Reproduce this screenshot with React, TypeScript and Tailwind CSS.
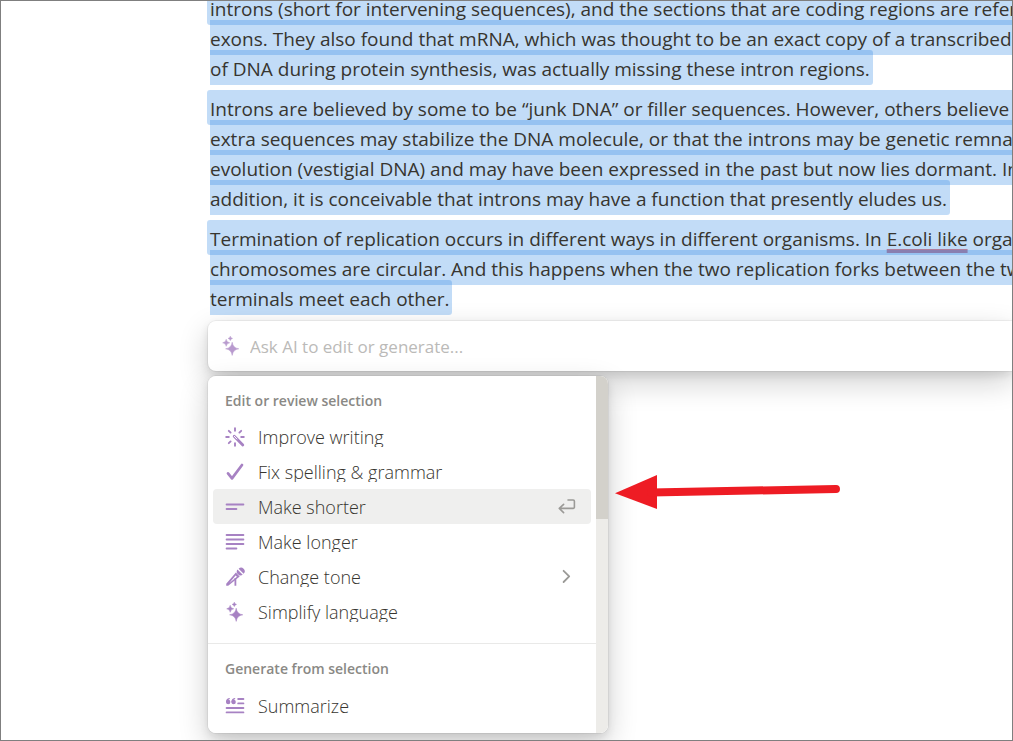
import type { ReactNode } from "react";

const purple = "#a782c3";

function Star({ x, y, r }: { x: number; y: number; r: number }) {
  const k = r * 0.12;
  return (
    <path
      d={`M${x} ${y - r}Q${x + k} ${y - k} ${x + r} ${y}Q${x + k} ${y + k} ${x} ${y + r}Q${x - k} ${y + k} ${x - r} ${y}Q${x - k} ${y - k} ${x} ${y - r}Z`}
      stroke={purple}
      strokeWidth={0.5}
      strokeLinejoin="round"
    />
  );
}

function Icon({ children, className = "" }: { children: ReactNode; className?: string }) {
  return (
    <svg viewBox="0 0 20 20" fill={purple} aria-hidden="true" className={`size-5 shrink-0 ${className}`}>
      {children}
    </svg>
  );
}

function SparkleIcon({ className = "" }: { className?: string }) {
  return (
    <Icon className={className}>
      <Star x={11.2} y={12.8} r={6.6} />
      <Star x={5.2} y={6.8} r={3.5} />
      <Star x={9.3} y={2.4} r={2.2} />
    </Icon>
  );
}

function WandIcon() {
  return (
    <Icon>
      <g stroke={purple} strokeWidth={1.9} strokeLinecap="round" fill="none">
        <path d="M10 1.2v2.6M10 16.2v2.6M1.2 10h2.6M16.2 10h2.6M3.8 3.8l1.8 1.8M16.2 3.8l-1.8 1.8M3.8 16.2l1.8-1.8" />
        <path d="M9.2 9.2l8.6 8.8" strokeWidth={2.8} />
        <path d="M9.3 9.3l2.6 2.7" stroke="#ffffff" strokeWidth={1} />
      </g>
    </Icon>
  );
}

function CheckIcon() {
  return (
    <Icon>
      <path d="M3 11.4l4 5L17 3" fill="none" stroke={purple} strokeWidth={2.7} strokeLinecap="round" strokeLinejoin="round" />
    </Icon>
  );
}

function ShorterIcon() {
  return (
    <Icon>
      <path d="M1.6 7.5h16.8M1.6 12h9.8" fill="none" stroke={purple} strokeWidth={1.9} strokeLinecap="round" />
    </Icon>
  );
}

function LongerIcon() {
  return (
    <Icon>
      <path d="M1.6 3h16.8M1.6 7.5h16.8M1.6 12h16.8M1.6 16.5h9.8" fill="none" stroke={purple} strokeWidth={1.9} strokeLinecap="round" />
    </Icon>
  );
}

function MicIcon() {
  return (
    <Icon>
      <path d="M13.6 1.7a3.5 3.5 0 0 1 5 5l-5-5zM12.5 2.6l5.2 5.2a3.6 3.6 0 0 1-3.6.5l-2.1-2.1a3.6 3.6 0 0 1 .5-3.6z" />
      <path d="M10.9 5.6l3.8 3.8L3.2 18.8H1.2v-2zM10.6 8.6L4.4 16l7.5-6.2z" fillRule="evenodd" />
      <path d="M10.4 11v7.8" stroke={purple} strokeWidth={1.8} fill="none" />
    </Icon>
  );
}

function SummarizeIcon() {
  return (
    <Icon>
      <path d="M13.2 3h5.2M13.2 7.4h5.2M1.6 12h16.8M1.6 16.4h16.8" fill="none" stroke={purple} strokeWidth={1.9} strokeLinecap="round" />
      <circle cx={3.2} cy={6} r={2.2} />
      <circle cx={8.6} cy={6} r={2.2} />
      <path d="M1.6 6c0-2 .9-3.1 2.7-3.4M7 6c0-2 .9-3.1 2.7-3.4" fill="none" stroke={purple} strokeWidth={1.2} strokeLinecap="round" />
    </Icon>
  );
}

function ReturnIcon() {
  return (
    <svg viewBox="0 0 20 20" fill="none" stroke="#9b9a97" strokeWidth={1.6} strokeLinecap="round" strokeLinejoin="round" aria-hidden="true" className="size-5 shrink-0">
      <path d="M11 3h5.2a1.2 1.2 0 0 1 1.2 1.2v6a1.2 1.2 0 0 1-1.2 1.2H2.4M6.6 7.4l-4.3 4 4.3 4.2" />
    </svg>
  );
}

function ChevronIcon() {
  return (
    <svg viewBox="0 0 20 20" fill="none" stroke="#9b9a97" strokeWidth={1.8} strokeLinecap="round" strokeLinejoin="round" aria-hidden="true" className="size-5 shrink-0">
      <path d="M6.6 3.8l5.6 5.6-5.6 5.6" />
    </svg>
  );
}

function Selected({ children }: { children: ReactNode }) {
  return (
    <p className="-indent-[3px]">
      <span className="rounded-[3px] bg-[rgba(35,131,226,0.28)] px-[3px] pt-[6px] pb-[3px]">{children}</span>
    </p>
  );
}

function Item({ icon, label, end, active }: { icon: ReactNode; label: string; end?: ReactNode; active?: boolean }) {
  return (
    <li>
      <button type="button" className={`flex h-[35px] w-full items-center rounded-[4px] pr-[14px] pl-3 text-left ${active ? "bg-[#efefee]" : ""}`}>
        {icon}
        <span className="ml-[13px] flex-1 truncate text-[18px] leading-5 font-light text-[#37352f]">{label}</span>
        {end}
      </button>
    </li>
  );
}

function Heading({ children }: { children: ReactNode }) {
  return <h2 className="px-[17px] text-[14px] leading-5 font-semibold text-[#8a8985]">{children}</h2>;
}

export default function App() {
  return (
    <main className="relative min-h-screen overflow-hidden border border-[#7f7f7f] bg-white pb-[7px] pl-[206px] font-['Open_Sans','Noto_Sans',sans-serif] text-[#37352f]">
      <article className="-mt-[7px] ml-[3px] flex flex-col gap-[10px] text-[19px] leading-[30px] whitespace-nowrap">
        <Selected>
          introns (short for intervening sequences), and the sections that are coding regions are referred to as
          <br />
          exons. They also found that mRNA, which was thought to be an exact copy of a transcribed section
          <br />
          of DNA during protein synthesis, was actually missing these intron regions.
        </Selected>
        <Selected>
          Introns are believed by some to be “junk DNA” or filler sequences. However, others believe that
          <br />
          extra sequences may stabilize the DNA molecule, or that the introns may be genetic remnants of
          <br />
          evolution (vestigial DNA) and may have been expressed in the past but now lies dormant. In
          <br />
          addition, it is conceivable that introns may have a function that presently eludes us.
        </Selected>
        <Selected>
          Termination of replication occurs in different ways in different organisms. In{" "}
          <span className="underline decoration-[#b07f9d] decoration-4 underline-offset-3 [text-decoration-skip-ink:none]">E.coli like</span> organisms
          <br />
          chromosomes are circular. And this happens when the two replication forks between the two
          <br />
          terminals meet each other.
        </Selected>
      </article>

      <label className="mt-[7px] ml-px flex h-[50px] items-center rounded-l-[8px] bg-white pl-[13px] shadow-[0_0_0_1px_rgba(15,15,15,0.05),0_4px_8px_rgba(15,15,15,0.1),0_11px_30px_rgba(15,15,15,0.2)]">
        <SparkleIcon className="opacity-80" />
        <input
          type="text"
          aria-label="Ask AI"
          placeholder="Ask AI to edit or generate..."
          className="ml-[9px] flex-1 bg-transparent pt-px text-[17px] outline-none placeholder:text-[#bbbab8]"
        />
      </label>

      <div className="relative mt-[5px] ml-px flex w-[400px] rounded-[8px] shadow-[0_0_0_1px_rgba(15,15,15,0.05),0_4px_8px_rgba(15,15,15,0.1),0_11px_30px_rgba(15,15,15,0.2)]">
        <div className="flex flex-1 overflow-hidden rounded-[8px] bg-white">
          <div className="min-w-0 flex-1">
            <section className="pt-[15px] pb-[14px]">
              <Heading>Edit or review selection</Heading>
              <ul className="mt-2 px-[5px]">
                <Item icon={<WandIcon />} label="Improve writing" />
                <Item icon={<CheckIcon />} label="Fix spelling & grammar" />
                <Item icon={<ShorterIcon />} label="Make shorter" end={<ReturnIcon />} active />
                <Item icon={<LongerIcon />} label="Make longer" />
                <Item icon={<MicIcon />} label="Change tone" end={<ChevronIcon />} />
                <Item icon={<SparkleIcon />} label="Simplify language" />
              </ul>
            </section>
            <section className="border-t border-[#e9e9e8] pt-[15px] pb-[10px]">
              <Heading>Generate from selection</Heading>
              <ul className="mt-[9px] px-[5px]">
                <Item icon={<SummarizeIcon />} label="Summarize" />
              </ul>
            </section>
          </div>
          <div className="w-3 bg-[#edece9]">
            <div className="h-2/5 bg-[#d3d1cb]" />
          </div>
        </div>
        <svg viewBox="0 0 226 36" aria-hidden="true" className="absolute top-[98px] left-[407px] h-9 w-[226px]">
          <path d="M0 19.3L42 1v34z" fill="#ee1c24" />
          <path d="M36 18.5L221 15" stroke="#ee1c24" strokeWidth={8} strokeLinecap="round" />
        </svg>
      </div>
    </main>
  );
}
